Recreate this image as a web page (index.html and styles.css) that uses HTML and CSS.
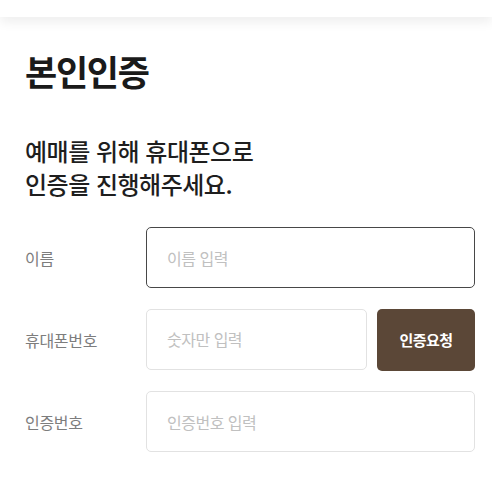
FILE: index.html
```html
<!DOCTYPE html>
<html lang="ko">
<head>
<meta charset="utf-8">
<link rel="stylesheet" href="styles.css">
</head>
<body>
<header class="topbar"></header>
<main class="page">
  <h1 class="title">본인인증</h1>
  <p class="lead">예매를 위해 휴대폰으로<br>인증을 진행해주세요.</p>
  <form class="form">
    <div class="row">
      <label class="label">이름</label>
      <input class="field field-focus" type="text" placeholder="이름 입력">
    </div>
    <div class="row">
      <label class="label">휴대폰번호</label>
      <div class="combo">
        <input class="field" type="text" placeholder="숫자만 입력">
        <button class="btn" type="button">인증요청</button>
      </div>
    </div>
    <div class="row">
      <label class="label">인증번호</label>
      <input class="field" type="text" placeholder="인증번호 입력">
    </div>
  </form>
</main>
</body>
</html>
```
FILE: styles.css
```css
* { box-sizing: border-box; }
html, body { margin: 0; padding: 0; background: #fff; }
body {
  font-family: "Noto Sans CJK KR", "Noto Sans", sans-serif;
  color: #222;
  width: 492px;
  height: 501px;
  overflow: hidden;
}
.topbar {
  height: 17px;
  background: #fff;
  box-shadow: 0 5px 12px rgba(0,0,0,0.07);
  position: relative;
  z-index: 1;
}
.page {
  padding: 0 17px 0 25px;
}
.title {
  margin: 30px 0 0;
  font-size: 35px;
  font-weight: 700;
  letter-spacing: -1.3px;
  line-height: 48px;
  color: #1a1a1a;
}
.lead {
  margin: 39px 0 0;
  font-size: 24px;
  font-weight: 500;
  letter-spacing: -0.5px;
  line-height: 33px;
  color: #1e1e1e;
}
.form {
  margin-top: 27px;
  display: flex;
  flex-direction: column;
  gap: 20.5px;
}
.row {
  display: flex;
  align-items: center;
}
.label {
  width: 121px;
  flex: none;
  font-size: 16px;
  color: #7d7d7d;
  letter-spacing: -0.3px;
}
.field {
  flex: 1;
  min-width: 0;
  height: 61px;
  border: 1px solid #e2e2e2;
  border-radius: 5px;
  padding: 0 20px;
  font-family: inherit;
  font-size: 16px;
  letter-spacing: -0.5px;
  color: #222;
  background: #fff;
  outline: none;
}
.field::placeholder { color: #c0c0c0; }
.field-focus { border: 1.5px solid #484848; }
.combo {
  flex: 1;
  display: flex;
  gap: 10px;
}
.btn {
  width: 98px;
  flex: none;
  height: 62px;
  border: none;
  border-radius: 5px;
  background: #5b4737;
  color: #fff;
  font-family: inherit;
  font-size: 15px;
  font-weight: 700;
  letter-spacing: -0.5px;
}
```
